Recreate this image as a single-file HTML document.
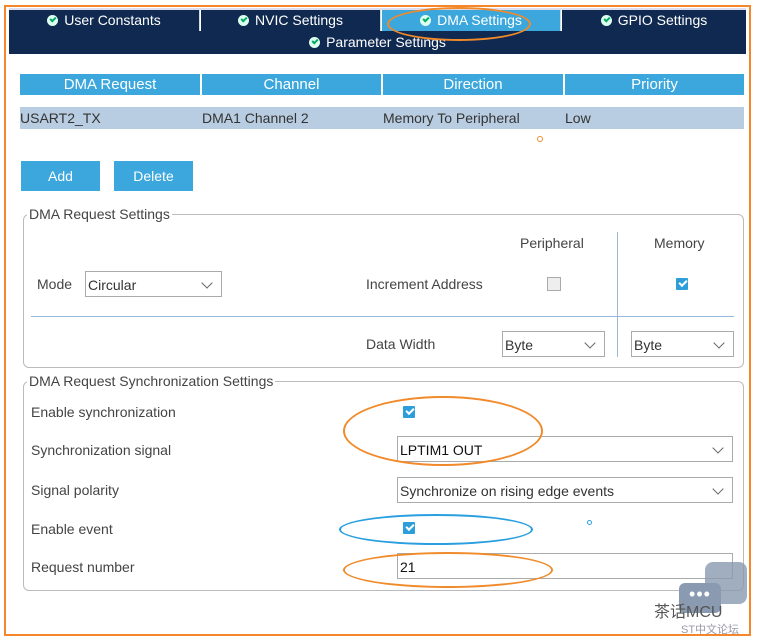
<!DOCTYPE html><html><head><meta charset="utf-8"><style>
body{margin:0;width:757px;height:644px;background:#fff;position:relative;overflow:hidden;font-family:"Liberation Sans","Noto Sans CJK SC",sans-serif;font-size:14px;color:#444}
.a{position:absolute}
.tab{position:absolute;top:10px;height:21px;background:#0f2950;color:#fff;text-align:center;line-height:21px;font-size:14px;border-right:1px solid #cdd}
.ck{display:inline-block;width:11px;height:11px;border-radius:50%;background:#dfe;vertical-align:-1px;margin-right:6px;position:relative}
.ck:after{content:"";position:absolute;left:3px;top:2px;width:4px;height:2px;border-left:2px solid #0a6;border-bottom:2px solid #0a6;transform:rotate(-45deg)}
.th{position:absolute;top:74px;height:21px;background:#3ba7dc;color:#fff;text-align:center;line-height:21px;font-size:15px}
.td{position:absolute;top:107px;height:22px;background:#b9cde2;line-height:22px;color:#333;font-size:14px}
.btn{position:absolute;top:161px;height:30px;background:#3ba7dc;color:#fff;text-align:center;line-height:30px;font-size:14px}
.sel{position:absolute;border:1px solid #aaa;background:#fff;height:26px;line-height:26px;padding-left:2px;box-sizing:border-box;color:#333}
.arr:after{content:"";position:absolute;right:10px;top:7px;width:7px;height:7px;border-right:1.5px solid #666;border-bottom:1.5px solid #666;transform:rotate(45deg)}
.cb{position:absolute;width:12px;height:12px;background:#2c9fda;border-radius:1px}
.cb:after{content:"";position:absolute;left:3px;top:2px;width:6px;height:3px;border-left:2px solid #fff;border-bottom:2px solid #fff;transform:rotate(-45deg)}
.ov{position:absolute;border:2px solid #f08a2a;border-radius:50%}
</style></head><body>
<div class="a" style="left:4px;top:5px;width:743px;height:627px;border:2px solid #f5862a"></div>
<div class="a" style="left:9px;top:8px;width:737px;height:2px;background:#dde"></div>
<div class="tab" style="left:9px;width:190px"><span class="ck"></span>User Constants</div>
<div class="tab" style="left:201px;width:179px"><span class="ck"></span>NVIC Settings</div>
<div class="tab" style="left:382px;width:178px;background:#3ba7dc"><span class="ck"></span>DMA Settings</div>
<div class="tab" style="left:562px;width:184px;border:none"><span class="ck"></span>GPIO Settings</div>
<div class="tab" style="left:9px;top:31px;width:737px;height:23px;line-height:23px;border:none"><span class="ck"></span>Parameter Settings</div>
<div class="ov" style="left:387px;top:7px;width:140px;height:30px"></div>
<div class="th" style="left:20px;width:180px">DMA Request</div>
<div class="th" style="left:202px;width:179px">Channel</div>
<div class="th" style="left:383px;width:180px">Direction</div>
<div class="th" style="left:565px;width:179px">Priority</div>
<div class="td" style="left:20px;width:182px">USART2_TX</div>
<div class="td" style="left:202px;width:181px">DMA1 Channel 2</div>
<div class="td" style="left:383px;width:182px">Memory To Peripheral</div>
<div class="td" style="left:565px;width:179px">Low</div>
<div class="a" style="left:537px;top:136px;width:4px;height:4px;border:1px solid #f08a2a;border-radius:50%"></div>
<div class="btn" style="left:21px;width:79px">Add</div>
<div class="btn" style="left:114px;width:79px">Delete</div>
<div class="a" style="left:23px;top:214px;width:719px;height:152px;border:1px solid #bbb;border-radius:6px"></div>
<div class="a" style="left:27px;top:206px;background:#fff;padding:0 2px;color:#444">DMA Request Settings</div>
<div class="a" style="left:520px;top:235px">Peripheral</div>
<div class="a" style="left:654px;top:235px">Memory</div>
<div class="a" style="left:617px;top:232px;width:1px;height:125px;background:#9ab8d8"></div>
<div class="a" style="left:31px;top:316px;width:703px;height:1px;background:#9ab8d8"></div>
<div class="a" style="left:37px;top:276px">Mode</div>
<div class="sel arr" style="left:85px;top:271px;width:137px">Circular</div>
<div class="a" style="left:366px;top:276px">Increment Address</div>
<div class="a" style="left:547px;top:277px;width:12px;height:12px;border:1px solid #aaa;background:#eee"></div>
<div class="cb" style="left:676px;top:278px"></div>
<div class="a" style="left:366px;top:336px">Data Width</div>
<div class="sel arr" style="left:502px;top:331px;width:103px">Byte</div>
<div class="sel arr" style="left:631px;top:331px;width:103px">Byte</div>
<div class="a" style="left:23px;top:381px;width:719px;height:208px;border:1px solid #bbb;border-radius:6px"></div>
<div class="a" style="left:27px;top:373px;background:#fff;padding:0 2px">DMA Request Synchronization Settings</div>
<div class="a" style="left:31px;top:404px">Enable synchronization</div>
<div class="cb" style="left:403px;top:406px"></div>
<div class="a" style="left:31px;top:442px">Synchronization signal</div>
<div class="sel arr" style="left:397px;top:436px;width:336px;color:#111">LPTIM1 OUT</div>
<div class="a" style="left:31px;top:482px">Signal polarity</div>
<div class="sel arr" style="left:397px;top:477px;width:336px">Synchronize on rising edge events</div>
<div class="a" style="left:31px;top:521px">Enable event</div>
<div class="cb" style="left:403px;top:522px"></div>
<div class="a" style="left:31px;top:559px">Request number</div>
<div class="sel" style="left:397px;top:553px;width:336px;color:#111">21</div>
<div class="ov" style="left:343px;top:396px;width:196px;height:66px"></div>
<div class="ov" style="left:339px;top:514px;width:190px;height:27px;border-color:#2a9fe0"></div>
<div class="ov" style="left:343px;top:552px;width:206px;height:32px"></div>
<div class="a" style="left:587px;top:520px;width:3px;height:3px;border:1px solid #2a9fe0;border-radius:50%"></div>
<div class="a" style="left:705px;top:562px;width:42px;height:42px;background:#8a9ab0;border-radius:8px;opacity:.8"></div>
<div class="a" style="left:679px;top:583px;width:42px;height:30px;background:#8a9ab0;border-radius:6px;color:#fff;text-align:center;line-height:22px;font-size:18px;letter-spacing:1px">•••</div>
<div class="a" style="left:654px;top:598px;font-size:16px;color:#555">茶话MCU</div>
<div class="a" style="left:681px;top:621px;font-size:11px;color:#99a">ST中文论坛</div>
</body></html>
